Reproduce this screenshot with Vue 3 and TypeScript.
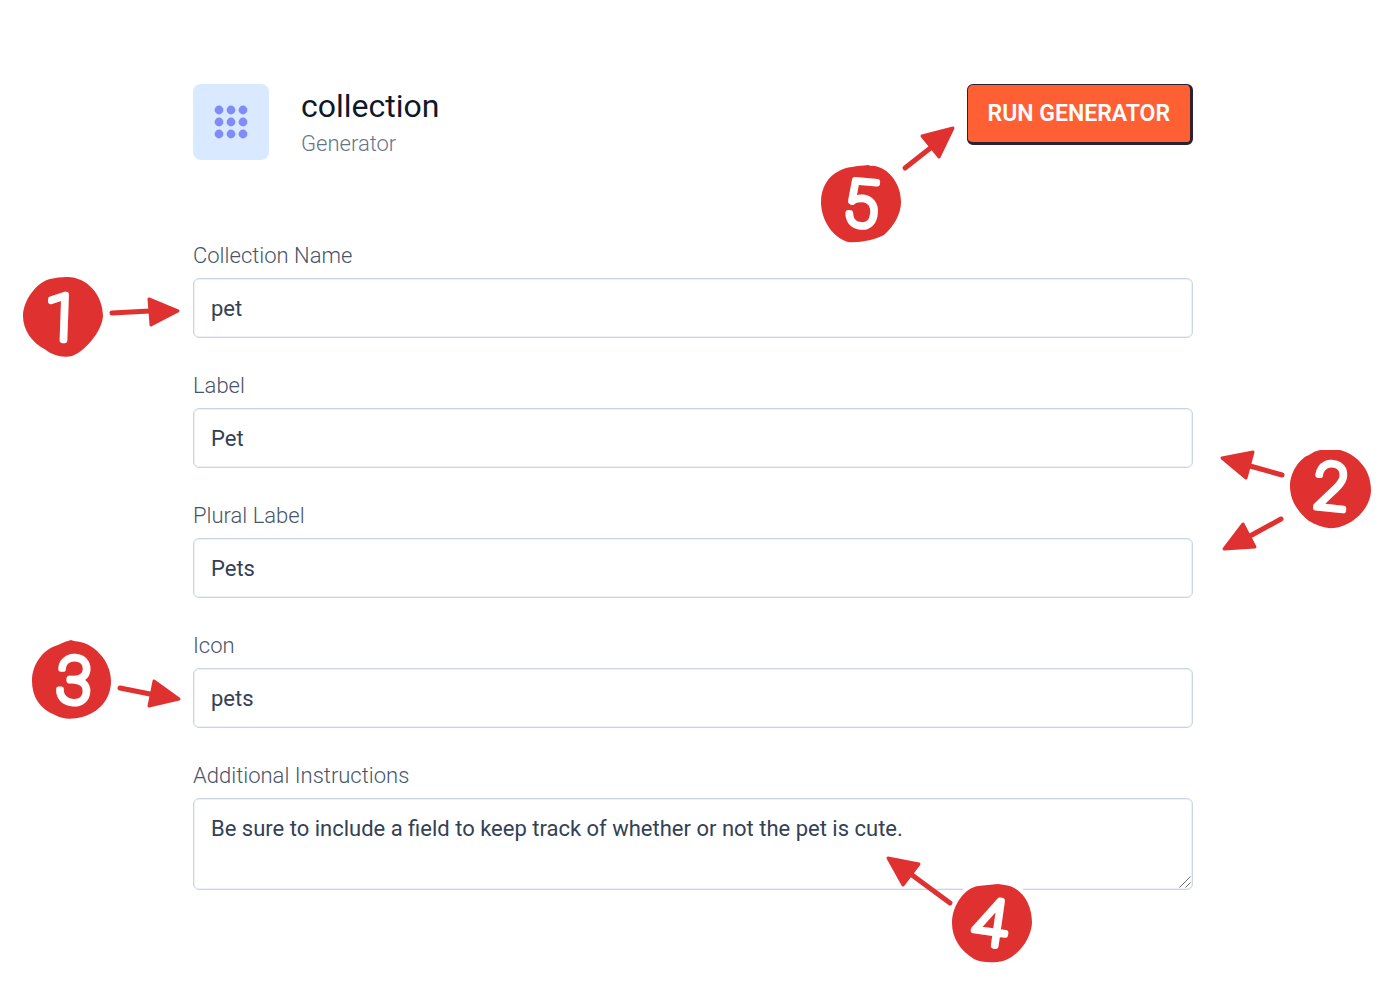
<script setup lang="ts">
import { ref } from 'vue'

interface Mark {
  digit: string
  cls: string
  viewBox: string
  blob: string
  x: number
  y: number
  turn: number
  arrows: { shaft: string; head: string }[]
}

interface Field {
  id: string
  label: string
  value: string
  multiline?: boolean
  mark?: Mark
}

const runMark: Mark = {
  digit: '5',
  cls: 'mark-run',
  viewBox: '800 120 160 130',
  blob: 'M868 165C858 166 845 167 839 171C828 176 821 188 821 202C821 220 833 238 848 242C860 243 874 240 884 235C894 226 901 214 901 202C901 186 892 173 881 168Q874 165 871 166Z',
  x: 861,
  y: 226,
  turn: 5,
  arrows: [{ shaft: 'M905 168L933 146', head: 'M953 128L922 136L939 157Z' }],
}

const fields = ref<Field[]>([
  {
    id: 'collection-name',
    label: 'Collection Name',
    value: 'pet',
    mark: {
      digit: '1',
      cls: 'mark-name',
      viewBox: '15 268 170 96',
      blob: 'M67 277C88 277 103 296 103 316C102 332 84 352 72 356C62 358 52 355 46 350C32 343 23 330 23 316C23 300 37 282 50 279Q58 277 67 277Z',
      x: 62,
      y: 340,
      turn: 2,
      arrows: [{ shaft: 'M112 313L150 311', head: 'M149 299L178 311L151 325Z' }],
    },
  },
  {
    id: 'label',
    label: 'Label',
    value: 'Pet',
    mark: {
      digit: '2',
      cls: 'mark-labels',
      viewBox: '1215 440 160 120',
      blob: 'M1320 450L1340 450C1358 455 1371 470 1371 490C1371 508 1353 526 1334 528C1326 529 1316 525 1309 521C1297 511 1290 500 1290 486C1290 472 1300 458 1309 455Q1314 451 1320 450Z',
      x: 1331,
      y: 509,
      turn: 6,
      arrows: [
        { shaft: 'M1282 475L1250 466', head: 'M1222 458L1253 452L1246 478Z' },
        { shaft: 'M1281 519L1250 536', head: 'M1224 549L1243 524L1255 547Z' },
      ],
    },
  },
  { id: 'plural-label', label: 'Plural Label', value: 'Pets' },
  {
    id: 'icon',
    label: 'Icon',
    value: 'pets',
    mark: {
      digit: '3',
      cls: 'mark-icon',
      viewBox: '25 633 160 92',
      blob: 'M71 640L74 641C94 642 111 661 111 681C111 700 98 713 82 717C73 719 64 720 55 715C40 709 32 697 32 681C32 665 42 651 55 646C61 644 66 641 68 641Z',
      x: 74,
      y: 703,
      turn: 3,
      arrows: [{ shaft: 'M120 688L150 694', head: 'M154 681L179 699L149 706Z' }],
    },
  },
  {
    id: 'additional-instructions',
    label: 'Additional Instructions',
    value: 'Be sure to include a field to keep track of whether or not the pet is cute.',
    multiline: true,
    mark: {
      digit: '4',
      cls: 'mark-instructions',
      viewBox: '880 850 160 120',
      blob: 'M998 885L1005 886C1021 888 1032 904 1032 924C1031 941 1017 958 1003 962C995 964 981 964 974 960C961 952 952 940 952 924C952 906 965 889 978 887Q988 886 998 885Z',
      x: 990,
      y: 946,
      turn: 8,
      arrows: [{ shaft: 'M912 876L950 904', head: 'M888 859L919 865L903 886Z' }],
    },
  },
])

const dots = [7, 19, 31].flatMap((cy) => [7, 19, 31].map((cx) => ({ cx, cy })))
</script>

<template>
  <main class="page">
    <header class="header">
      <div class="tile">
        <svg viewBox="0 0 38 38" width="38" height="38" aria-hidden="true">
          <circle v-for="d in dots" :key="`${d.cx}-${d.cy}`" :cx="d.cx" :cy="d.cy" r="4.4" />
        </svg>
      </div>
      <div class="heading">
        <h1>collection</h1>
        <p>Generator</p>
      </div>
      <div class="action">
        <button type="submit" form="generator" class="run">RUN GENERATOR</button>
        <svg class="mark" :class="runMark.cls" :viewBox="runMark.viewBox">
          <g v-for="a in runMark.arrows" :key="a.shaft">
            <path class="shaft" :d="a.shaft" />
            <path class="head" :d="a.head" />
          </g>
          <path class="blob" :d="runMark.blob" />
          <text :x="runMark.x" :y="runMark.y" :transform="`rotate(${runMark.turn} ${runMark.x} ${runMark.y - 22})`">{{ runMark.digit }}</text>
        </svg>
      </div>
    </header>

    <form id="generator" class="form" @submit.prevent>
      <div v-for="f in fields" :key="f.id" class="field">
        <label :for="f.id">{{ f.label }}</label>
        <div class="control">
          <template v-if="f.multiline">
            <textarea :id="f.id" v-model="f.value" spellcheck="false"></textarea>
            <svg class="grip" viewBox="0 0 12 12" aria-hidden="true">
              <path d="M0.5 11.5L11.5 0.5M6.5 11.5L11.5 6.5" />
            </svg>
          </template>
          <input v-else :id="f.id" v-model="f.value" type="text" spellcheck="false" />
          <svg v-if="f.mark" class="mark" :class="f.mark.cls" :viewBox="f.mark.viewBox">
            <g v-for="a in f.mark.arrows" :key="a.shaft">
              <path class="shaft" :d="a.shaft" />
              <path class="head" :d="a.head" />
            </g>
            <path class="blob" :d="f.mark.blob" />
            <text :x="f.mark.x" :y="f.mark.y" :transform="`rotate(${f.mark.turn} ${f.mark.x} ${f.mark.y - 22})`">{{ f.mark.digit }}</text>
          </svg>
        </div>
      </div>
    </form>
  </main>
</template>

<style>
body {
  margin: 0;
  background: #ffffff;
}
</style>

<style scoped>
.page {
  box-sizing: border-box;
  padding: 84px 200px 100px 193px;
  font-family: Roboto, 'Liberation Sans', sans-serif;
  font-size: 22px;
  line-height: 32px;
  color: #334155;
}

.header {
  display: flex;
  align-items: flex-start;
  margin-bottom: 79px;
}

.tile {
  display: flex;
  align-items: center;
  justify-content: center;
  width: 76px;
  height: 76px;
  border-radius: 8px;
  background: #d9e9ff;
  fill: #818cf8;
}

.heading {
  flex: 1;
  margin-left: 32px;
}

h1 {
  margin: 0;
  font-size: 32px;
  line-height: 44px;
  font-weight: 400;
  color: #0f172a;
}

p {
  margin: 0;
  font-weight: 300;
  color: #64748b;
}

.action,
.control {
  position: relative;
}

.run {
  display: block;
  box-sizing: border-box;
  height: 61px;
  padding: 0 20px;
  border: solid #2d2033;
  border-width: 1px 3px 3px 1px;
  border-radius: 6px;
  background: #ff6033;
  color: #ffffff;
  font: inherit;
  font-size: 23px;
  font-weight: 600;
  cursor: pointer;
}

.form {
  display: flex;
  flex-direction: column;
  gap: 31px;
}

.field {
  display: flex;
  flex-direction: column;
  gap: 7px;
}

label {
  padding-top: 1px;
  margin-bottom: -1px;
  font-weight: 300;
  color: #475569;
}

input,
textarea {
  display: block;
  box-sizing: border-box;
  width: 100%;
  margin: 0;
  border: 1px solid #cbd5e1;
  border-radius: 6px;
  background: #ffffff;
  box-shadow: inset 0 0 0 1px #edf1f6;
  color: #334155;
  font: inherit;
  outline: none;
}

input {
  height: 60px;
  padding: 0 17px;
}

textarea {
  height: 92px;
  padding: 14px 17px;
  resize: none;
}

.grip {
  position: absolute;
  right: 2px;
  bottom: 2px;
  width: 12px;
  height: 12px;
  fill: none;
  stroke: #6b6b6b;
  pointer-events: none;
}

.mark {
  position: absolute;
  fill: #e03131;
  stroke: #e03131;
  stroke-linecap: round;
  stroke-linejoin: round;
  pointer-events: none;
}

.shaft {
  stroke-width: 5px;
}

.head {
  stroke-width: 3px;
}

.blob {
  stroke: none;
}

.mark text {
  fill: #ffffff;
  stroke: #ffffff;
  stroke-width: 6px;
  font-size: 64px;
  font-weight: 100;
  text-anchor: middle;
}

.mark-run {
  left: -167px;
  top: 36px;
  width: 160px;
  height: 130px;
}

.mark-name {
  left: -178px;
  top: -10px;
  width: 170px;
  height: 96px;
}

.mark-labels {
  left: calc(100% + 22px);
  top: 32px;
  width: 160px;
  height: 120px;
}

.mark-icon {
  left: -168px;
  top: -35px;
  width: 160px;
  height: 92px;
}

.mark-instructions {
  right: 153px;
  top: 51px;
  width: 160px;
  height: 120px;
}

.mark-instructions .blob {
  stroke: #ffffff;
  stroke-width: 8px;
  paint-order: stroke;
}
</style>
